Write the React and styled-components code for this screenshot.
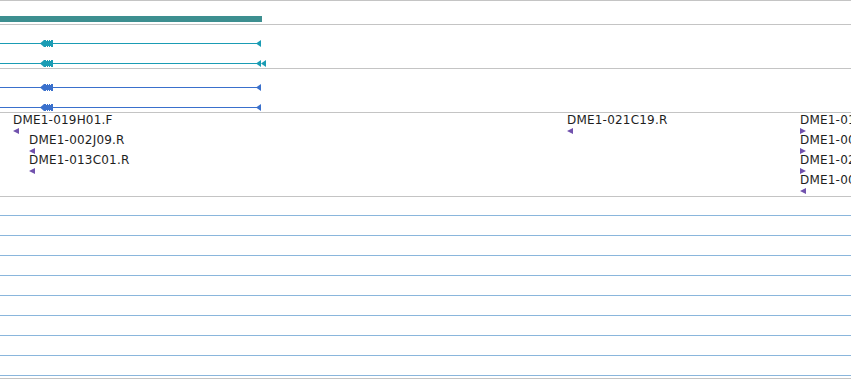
import React from 'react';
import styled, { createGlobalStyle } from 'styled-components';

const GlobalStyle = createGlobalStyle`
    html, body {
        margin: 0;
        padding: 0;
        background: #fff;
        overflow: hidden;
    }
    body {
        font-family: "DejaVu Sans", "Liberation Sans", sans-serif;
    }
`;

const Browser = styled.div`
    width: 851px;
    height: 380px;
    overflow: hidden;
    border-top: 1px solid #c4c4c4;
    box-sizing: border-box;
`;

const Track = styled.div`
    position: relative;
    box-sizing: border-box;
    height: ${(p) => p.$height}px;
    border-bottom: 1px solid #c4c4c4;
    overflow: hidden;
`;

const Bar = styled.div`
    position: absolute;
    left: ${(p) => p.$start}px;
    top: ${(p) => p.$top}px;
    width: ${(p) => p.$end - p.$start}px;
    height: 6px;
    background: #3d8f90;
`;

const GeneRow = styled.svg`
    position: absolute;
    left: 0;
    top: ${(p) => p.$top}px;
    shape-rendering: crispEdges;
`;

const Lanes = styled.div`
    display: grid;
    grid-template-rows: 19px repeat(8, 20px);
`;

const Lane = styled.div`
    border-bottom: 1px solid #8ab6dc;
`;

const Feature = styled.div`
    position: absolute;
    left: ${(p) => p.$x}px;
    top: ${(p) => p.$y}px;
    display: flex;
    flex-direction: column;
    align-items: flex-start;
    white-space: nowrap;
`;

const Label = styled.span`
    font-size: 12px;
    line-height: 14px;
    letter-spacing: 0.2px;
    color: #1e1e1e;
`;

const Strand = styled.svg`
    display: block;
    margin-top: 1px;
`;

const genes = [
    { top: 13, color: '#1a9cb4', ends: 1 },
    { top: 33, color: '#1a9cb4', ends: 2 },
];

const genesBlue = [
    { top: 13, color: '#3a70cc', ends: 1 },
    { top: 33, color: '#3a70cc', ends: 1 },
];

const features = [
    { x: 13, y: 0, name: 'DME1-019H01.F', dir: 'left' },
    { x: 29, y: 20, name: 'DME1-002J09.R', dir: 'left' },
    { x: 29, y: 40, name: 'DME1-013C01.R', dir: 'left' },
    { x: 567, y: 0, name: 'DME1-021C19.R', dir: 'left' },
    { x: 800, y: 0, name: 'DME1-015A04.F', dir: 'right' },
    { x: 800, y: 20, name: 'DME1-007D11.F', dir: 'right' },
    { x: 800, y: 40, name: 'DME1-023B08.F', dir: 'right' },
    { x: 800, y: 60, name: 'DME1-006E02.R', dir: 'left' },
];

const Gene = ({ top, color, ends }) => (
    <GeneRow $top={top} width="270" height="10" viewBox="0 0 270 10">
        <rect x="0" y="5" width="259" height="1" fill={color} />
        <path d="M40 5.5 L44 2 L53 2 L53 9 L44 9 Z" fill={color} shapeRendering="auto" />
        {[46, 48, 50].map((x) => (
            <g key={x} fill="#fff">
                <rect x={x} y="2" width="1" height="1" />
                <rect x={x} y="8" width="1" height="1" />
            </g>
        ))}
        <path d="M256 5.5 L261 2 L261 9 Z" fill={color} shapeRendering="auto" />
        {ends > 1 && <path d="M261 5.5 L266 2 L266 9 Z" fill={color} shapeRendering="auto" />}
    </GeneRow>
);

const Arrow = ({ dir }) => (
    <Strand width="6" height="6" viewBox="0 0 6 6">
        {dir === 'left' ? (
            <path d="M0 3 L6 0 L6 6 Z" fill="#7152ad" />
        ) : (
            <path d="M0 0 L6 3 L0 6 Z" fill="#7152ad" />
        )}
    </Strand>
);

const App = () => {
    return (
        <>
            <GlobalStyle />
            <Browser>
                <Track $height={24}>
                    <Bar $start={0} $end={262} $top={15} />
                </Track>
                <Track $height={44}>
                    {genes.map((g, i) => (
                        <Gene key={i} {...g} />
                    ))}
                </Track>
                <Track $height={44}>
                    {genesBlue.map((g, i) => (
                        <Gene key={i} {...g} />
                    ))}
                </Track>
                <Track $height={84}>
                    {features.map((f) => (
                        <Feature key={f.name} $x={f.x} $y={f.y}>
                            <Label>{f.name}</Label>
                            <Arrow dir={f.dir} />
                        </Feature>
                    ))}
                </Track>
                <Track $height={182}>
                    <Lanes>
                        {Array.from({ length: 9 }).map((_, i) => (
                            <Lane key={i} />
                        ))}
                    </Lanes>
                </Track>
            </Browser>
        </>
    );
};

export default App;
